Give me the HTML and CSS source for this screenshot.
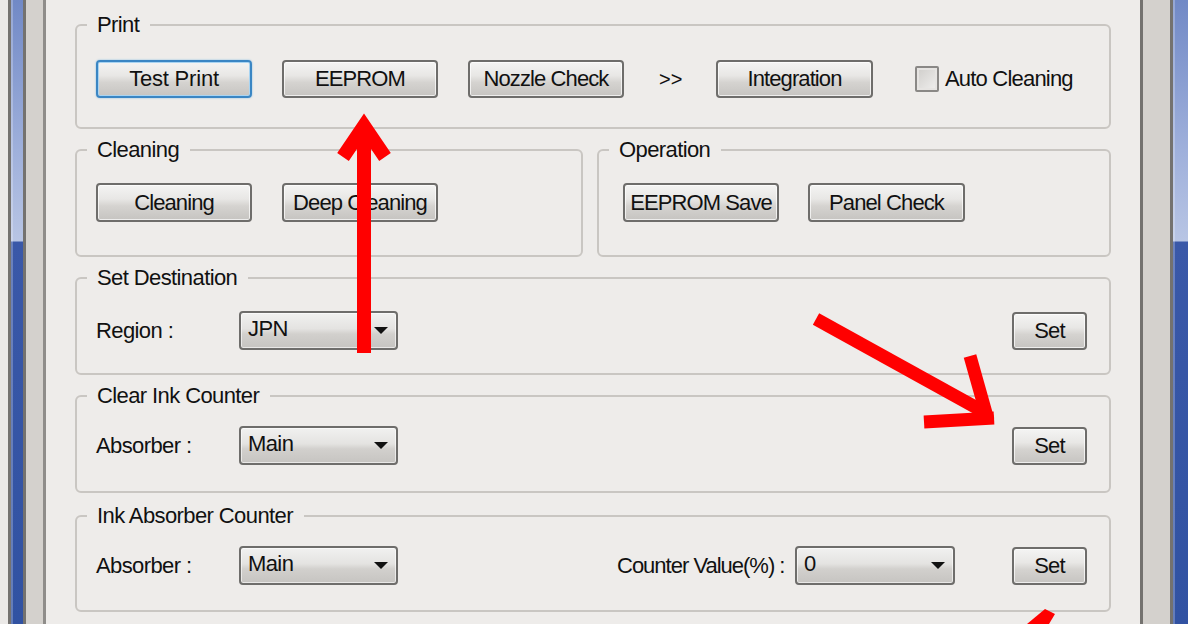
FILE: index.html
```html
<!DOCTYPE html>
<html lang="en">
<head>
<meta charset="utf-8">
<title>Adjustment Program</title>
<link rel="stylesheet" href="styles.css">
</head>
<body>
<div class="window">
  <div class="frame frame-left">
    <div class="f-outer"></div>
    <div class="f-line"></div>
    <div class="f-blue"></div>
    <div class="f-line"></div>
    <div class="f-beige"></div>
    <div class="f-line f-line-soft"></div>
  </div>

  <main class="dialog">
    <fieldset class="grp grp-print">
      <legend>Print</legend>
      <div class="row row-print">
        <button class="btn btn-wide btn-focus">Test Print</button>
        <button class="btn btn-wide">EEPROM</button>
        <button class="btn btn-wide">Nozzle Check</button>
        <span class="chev">&gt;&gt;</span>
        <button class="btn btn-wide btn-integ">Integration</button>
        <span class="check"></span>
        <span class="check-label">Auto Cleaning</span>
      </div>
    </fieldset>

    <div class="pair">
      <fieldset class="grp grp-half">
        <legend>Cleaning</legend>
        <div class="row row-half">
          <button class="btn btn-wide btn-tall">Cleaning</button>
          <button class="btn btn-wide btn-tall">Deep Cleaning</button>
        </div>
      </fieldset>
      <fieldset class="grp grp-half">
        <legend>Operation</legend>
        <div class="row row-half row-op">
          <button class="btn btn-wide btn-tall">EEPROM Save</button>
          <button class="btn btn-wide btn-tall btn-panel">Panel Check</button>
        </div>
      </fieldset>
    </div>

    <fieldset class="grp grp-dest">
      <legend>Set Destination</legend>
      <div class="row row-field">
        <span class="label">Region :</span>
        <div class="select"><span>JPN</span><i class="caret"></i></div>
        <button class="btn btn-set">Set</button>
      </div>
    </fieldset>

    <fieldset class="grp grp-clear">
      <legend>Clear Ink Counter</legend>
      <div class="row row-field row-low">
        <span class="label">Absorber :</span>
        <div class="select"><span>Main</span><i class="caret"></i></div>
        <button class="btn btn-set">Set</button>
      </div>
    </fieldset>

    <fieldset class="grp grp-abs">
      <legend>Ink Absorber Counter</legend>
      <div class="row row-field row-low">
        <span class="label">Absorber :</span>
        <div class="select"><span>Main</span><i class="caret"></i></div>
        <span class="label counter-label">Counter Value(%) :</span>
        <div class="select select-val"><span>0</span><i class="caret"></i></div>
        <button class="btn btn-set">Set</button>
      </div>
    </fieldset>
  </main>

  <div class="frame frame-right">
    <div class="f-line"></div>
    <div class="f-beige f-beige-r"></div>
    <div class="f-line"></div>
    <div class="f-blue f-blue-r"></div>
  </div>

  <svg class="arrows" width="1188" height="624" viewBox="0 0 1188 624" aria-hidden="true">
    <g fill="none" stroke="#ff0000" stroke-width="14">
      <line x1="364" y1="353" x2="364" y2="130"/>
      <polyline points="343,157 364,126 385,157" stroke-linejoin="miter"/>
      <line x1="816" y1="319" x2="986" y2="413" stroke-width="13"/>
      <line x1="970" y1="356" x2="988" y2="420" stroke-width="13"/>
      <line x1="924" y1="422" x2="994" y2="418" stroke-width="13"/>
    </g>
    <polygon points="1027,624 1045,609 1055,614 1049,624" fill="#ff0000"/>
  </svg>
</div>
</body>
</html>
```

FILE: styles.css
```css
html, body {
  margin: 0;
  padding: 0;
}

body {
  width: 1188px;
  height: 624px;
  overflow: hidden;
  background: #eeecea;
  font-family: "Liberation Sans", Arial, sans-serif;
  font-size: 22px;
  letter-spacing: -0.6px;
  color: #111;
}

.window {
  position: relative;
  display: flex;
  width: 1188px;
  height: 624px;
}

/* ---------- window frame ---------- */
.frame {
  display: flex;
  height: 100%;
}
.frame-left { flex: 0 0 46px; }
.frame-right { flex: 0 0 48px; }

.f-outer { width: 8px; background: #ebe9e7; }
.f-line { width: 3px; background: #74726f; }
.f-line-soft { background: #8f8d8a; }
.f-beige { width: 17px; background: #d4d1cd; }
.f-beige-r { width: 27px; }
.f-blue {
  width: 12px;
  background: linear-gradient(to bottom,
    #7189c6 0, #9fb0db 150px, #b8c5e4 241px,
    #3a58a8 242px, #3152a2 100%);
  box-shadow: inset 2px 0 0 rgba(255,255,255,0.25);
}
.f-blue-r { width: 15px; }

/* ---------- dialog content ---------- */
.dialog {
  flex: 1;
  box-sizing: border-box;
  padding: 13px 29px 0 29px;
  display: flex;
  flex-direction: column;
  gap: 9px;
}

.grp {
  margin: 0;
  padding: 0;
  min-width: 0;
  border: 2px solid #c9c6c2;
  border-radius: 6px;
}

.grp legend {
  margin-left: 10px;
  padding: 0 11px 0 10px;
  line-height: 24px;
  height: 24px;
}

.row {
  display: flex;
  align-items: center;
  padding-left: 19px;
  padding-right: 22px;
}

.row-print { padding-top: 23px; padding-bottom: 29px; }
.row-half { padding-top: 21px; padding-bottom: 33px; }
.row-op { padding-left: 24px; }
.row-field { padding-top: 21px; padding-bottom: 23px; }
.row-low { padding-top: 18px; padding-bottom: 26px; }
.grp-abs { margin-top: 2px; }
.grp-abs .row-low { padding-bottom: 25px; }

.pair {
  display: grid;
  grid-template-columns: 508px 1fr;
  column-gap: 14px;
}

/* ---------- buttons ---------- */
.btn {
  box-sizing: border-box;
  height: 38px;
  margin: 0;
  padding: 0;
  border: 2px solid #6e6d6b;
  border-radius: 4px;
  background: linear-gradient(to bottom, #f4f4f3 0%, #e8e7e5 40%, #d5d3d0 60%, #c6c4c1 100%);
  box-shadow: inset 0 0 0 1px rgba(255,255,255,0.7);
  font: inherit;
  letter-spacing: -0.9px;
  color: #111;
  display: flex;
  align-items: center;
  justify-content: center;
  white-space: nowrap;
}
.btn-wide { width: 156px; }
.btn-wide + .btn-wide { margin-left: 30px; }
.btn-tall { height: 39px; }
.btn-panel { margin-left: 29px !important; width: 157px; }

.btn-focus {
  border-color: #3a86c4;
  box-shadow: inset 0 0 0 1px #a8d4f2, 0 0 2px #7fb7e0;
  letter-spacing: -0.2px;
}

.chev {
  margin-left: 35px;
  width: 26px;
  font-size: 20px;
  letter-spacing: 0;
}
.btn-integ { margin-left: 31px; width: 157px; }

.check {
  box-sizing: border-box;
  width: 24px;
  height: 26px;
  margin-left: 42px;
  border: 2px solid #8a8886;
  border-radius: 2px;
  background: linear-gradient(135deg, #cfcdca, #f0efee);
  box-shadow: inset 0 0 0 2px #e6e4e2;
}
.check-label { margin-left: 6px; letter-spacing: -0.8px; }

.btn-set {
  width: 75px;
  height: 38px;
  margin-left: auto;
}

/* ---------- fields ---------- */
.label { width: 143px; }
.counter-label { width: 178px; margin-left: 219px; letter-spacing: -1px; }

.select {
  box-sizing: border-box;
  width: 159px;
  height: 39px;
  padding: 0 8px 0 7px;
  border: 2px solid #6e6d6b;
  border-radius: 4px;
  background: linear-gradient(to bottom, #f1f1f0 0%, #e4e3e1 45%, #d2d0cd 60%, #c6c4c1 100%);
  box-shadow: inset 0 0 0 1px rgba(255,255,255,0.6);
  display: flex;
  align-items: center;
  justify-content: space-between;
}
.select-val { width: 160px; }
.select span { padding-bottom: 3px; }

.caret {
  width: 0;
  height: 0;
  border-left: 7px solid transparent;
  border-right: 7px solid transparent;
  border-top: 7px solid #111;
}

/* ---------- annotation overlay ---------- */
.arrows {
  position: absolute;
  left: 0;
  top: 0;
  pointer-events: none;
}
```
